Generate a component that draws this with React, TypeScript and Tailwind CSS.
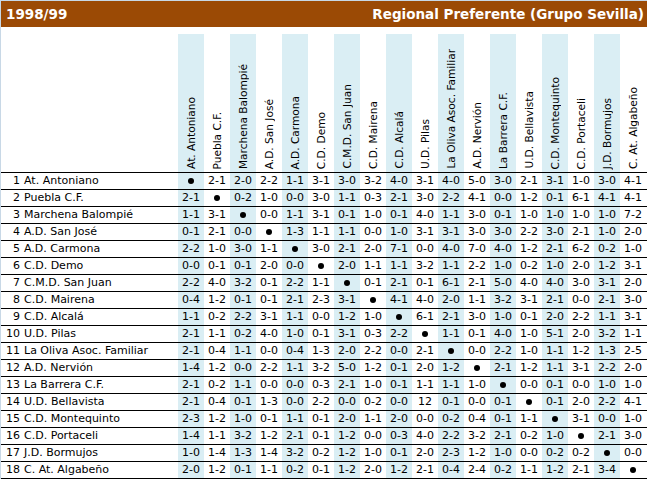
import React from 'react';

const TEAMS = [
  'At. Antoniano',
  'Puebla C.F.',
  'Marchena Balompié',
  'A.D. San José',
  'A.D. Carmona',
  'C.D. Demo',
  'C.M.D. San Juan',
  'C.D. Mairena',
  'C.D. Alcalá',
  'U.D. Pilas',
  'La Oliva Asoc. Familiar',
  'A.D. Nervión',
  'La Barrera C.F.',
  'U.D. Bellavista',
  'C.D. Montequinto',
  'C.D. Portaceli',
  'J.D. Bormujos',
  'C. At. Algabeño',
];

// "x" marks the diagonal (team against itself)
const RESULTS = [
  'x 2-1 2-0 2-2 1-1 3-1 3-0 3-2 4-0 3-1 4-0 5-0 3-0 2-1 3-1 1-0 3-0 4-1',
  '2-1 x 0-2 1-0 0-0 3-0 1-1 0-3 2-1 3-0 2-2 4-1 0-0 1-2 0-1 6-1 4-1 4-1',
  '1-1 3-1 x 0-0 1-1 3-1 0-1 1-0 0-1 4-0 1-1 3-0 0-1 1-0 1-0 1-0 1-0 7-2',
  '0-1 2-1 0-0 x 1-3 1-1 1-1 0-0 1-0 3-1 3-1 3-0 3-0 2-2 3-0 2-1 1-0 2-0',
  '2-2 1-0 3-0 1-1 x 3-0 2-1 2-0 7-1 0-0 4-0 7-0 4-0 1-2 2-1 6-2 0-2 1-0',
  '0-0 0-1 0-1 2-0 0-0 x 2-0 1-1 1-1 3-2 1-1 2-2 1-0 0-2 1-0 2-0 1-2 3-1',
  '2-2 4-0 3-2 0-1 2-2 1-1 x 0-1 2-1 0-1 6-1 2-1 5-0 4-0 4-0 3-0 3-1 2-0',
  '0-4 1-2 0-1 0-1 2-1 2-3 3-1 x 4-1 4-0 2-0 1-1 3-2 3-1 2-1 0-0 2-1 3-0',
  '1-1 0-2 2-2 3-1 1-1 0-0 1-2 1-0 x 6-1 2-1 3-0 1-0 0-1 2-0 2-2 1-1 3-1',
  '2-1 1-1 0-2 4-0 1-0 0-1 3-1 0-3 2-2 x 1-1 0-1 4-0 1-0 5-1 2-0 3-2 1-1',
  '2-1 0-4 1-1 0-0 0-4 1-3 2-0 2-2 0-0 2-1 x 0-0 2-2 1-0 1-1 1-2 1-3 2-5',
  '1-4 1-2 0-0 2-2 1-1 3-2 5-0 1-2 0-1 2-0 1-2 x 2-1 1-2 1-1 3-1 2-2 2-0',
  '2-1 0-2 1-1 0-0 0-0 0-3 2-1 1-0 0-1 1-1 1-1 1-0 x 0-0 0-1 0-0 1-0 1-0',
  '2-1 0-4 0-1 1-3 0-0 2-2 0-0 0-2 0-0 12 0-1 0-0 0-1 x 0-1 2-0 2-2 4-1',
  '2-3 1-2 1-0 0-1 1-1 0-1 2-0 1-1 2-0 0-0 0-2 0-4 0-1 1-1 x 3-1 0-0 1-0',
  '1-4 1-1 3-2 1-2 2-1 0-1 1-2 0-0 0-3 4-0 2-2 3-2 2-1 0-2 1-0 x 2-1 3-0',
  '1-0 1-4 1-3 1-4 3-2 0-2 1-2 1-0 0-1 2-0 2-3 1-2 1-0 0-0 0-2 0-2 x 0-0',
  '2-0 1-2 0-1 1-1 0-2 0-1 1-2 2-0 1-2 2-1 0-4 2-4 0-2 1-1 1-2 2-1 3-4 x',
].map((r) => r.split(' '));

function shade(i: number) {
  return i % 2 === 0 ? 'bg-[#daeef4]' : 'bg-white';
}

export default function App() {
  return (
    <div className="min-h-screen w-[647px] border-l border-t border-[#c8d8e6] bg-white font-['DejaVu_Sans',sans-serif] text-[11px] text-black">
      {/* Title bar */}
      <div className="flex h-[26px] items-center justify-between bg-[#9b4a05] pl-[5px] pr-[3px] text-[13.5px] font-bold text-white">
        <span>1998/99</span>
        <span>Regional Preferente (Grupo Sevilla)</span>
      </div>

      {/* Column headers */}
      <div className="mt-[7px] flex h-[138px]">
        <div className="w-[177px] shrink-0" />
        {TEAMS.map((t, i) => (
          <div key={t} className={`flex w-[26px] shrink-0 items-end justify-center pb-[3px] ${shade(i)}`}>
            <span className="rotate-180 whitespace-nowrap text-[10.6px] leading-[12px] [writing-mode:vertical-rl]">
              {t}
            </span>
          </div>
        ))}
      </div>

      {/* Results grid */}
      <div className="border-t border-black">
        {TEAMS.map((team, r) => (
          <div key={team} className="flex h-[17px] border-b border-black leading-[16px]">
            <div className="flex w-[177px] shrink-0 whitespace-nowrap">
              <span className="w-[19px] shrink-0 text-right">{r + 1}</span>
              <span className="pl-[4px]">{team}</span>
            </div>
            {RESULTS[r].map((res, c) => (
              <div key={c} className={`flex w-[26px] shrink-0 items-center justify-center ${shade(c)}`}>
                {res === 'x' ? <span className="h-[6px] w-[6px] rounded-full bg-black" /> : res}
              </div>
            ))}
          </div>
        ))}
      </div>
    </div>
  );
}
